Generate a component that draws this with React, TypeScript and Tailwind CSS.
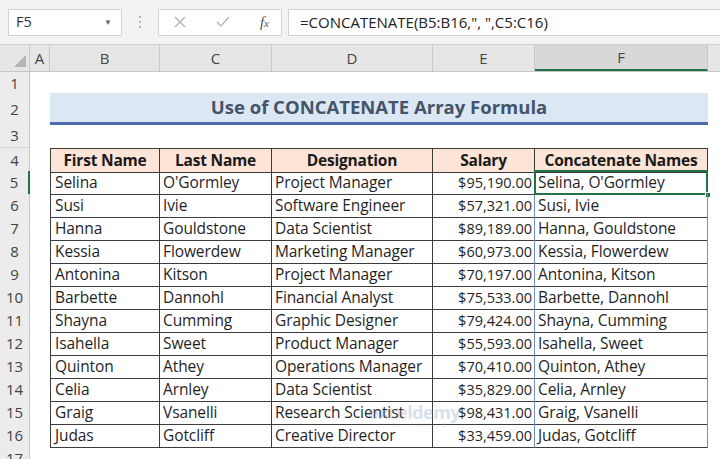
import React from "react";

const COLS = "grid grid-cols-[30px_20px_110px_112px_161px_102px_173px_12px]";

const data: [string, string, string, string][] = [
  ["Selina", "O'Gormley", "Project Manager", "$95,190.00"],
  ["Susi", "Ivie", "Software Engineer", "$57,321.00"],
  ["Hanna", "Gouldstone", "Data Scientist", "$89,189.00"],
  ["Kessia", "Flowerdew", "Marketing Manager", "$60,973.00"],
  ["Antonina", "Kitson", "Project Manager", "$70,197.00"],
  ["Barbette", "Dannohl", "Financial Analyst", "$75,533.00"],
  ["Shayna", "Cumming", "Graphic Designer", "$79,424.00"],
  ["Isahella", "Sweet", "Product Manager", "$55,593.00"],
  ["Quinton", "Athey", "Operations Manager", "$70,410.00"],
  ["Celia", "Arnley", "Data Scientist", "$35,829.00"],
  ["Graig", "Vsanelli", "Research Scientist", "$98,431.00"],
  ["Judas", "Gotcliff", "Creative Director", "$33,459.00"],
];

function RowLabel({ n, active }: { n: number; active?: boolean }) {
  return (
    <div
      className={
        "flex items-center justify-center bg-[#ececec] border-b border-[#d6d6d6] text-[15px] text-[#444] " +
        (active ? "border-r-2 border-r-[#217346] bg-[#dcdcdc]" : "border-r border-r-[#c9c9c9]")
      }
    >
      {n}
    </div>
  );
}

const cellText = "text-[15.5px] text-[#1f1f1f] whitespace-nowrap tracking-[-0.1px]";

export default function App() {
  return (
    <div className="w-[720px] h-[459px] overflow-hidden bg-white font-['Open_Sans',sans-serif] relative">
      {/* Toolbar */}
      <div className="h-[44px] bg-[#f3f3f3] flex items-center pl-[8px] gap-0">
        <div className="w-[114px] h-[27px] bg-white border border-[#d4d4d4] flex items-center justify-between pl-[7px] pr-[9px] text-[14.5px] text-[#333]">
          <span>F5</span>
          <span className="text-[8px] text-[#666]">▼</span>
        </div>
        <div className="w-[36px] flex flex-col items-center gap-[3px]">
          <span className="w-[2px] h-[2px] bg-[#b5b5b5]" />
          <span className="w-[2px] h-[2px] bg-[#b5b5b5]" />
          <span className="w-[2px] h-[2px] bg-[#b5b5b5]" />
        </div>
        <div className="w-[124px] h-[27px] bg-white border border-[#d4d4d4] flex items-center pl-[14px] pr-[12px] justify-between">
          <svg width="14" height="14" viewBox="0 0 14 14">
            <path d="M2 2 L12 12 M12 2 L2 12" stroke="#b8b8b8" strokeWidth="1.5" />
          </svg>
          <svg width="16" height="14" viewBox="0 0 16 14">
            <path d="M2 7 L6 11 L14 2" stroke="#b8b8b8" strokeWidth="1.5" fill="none" />
          </svg>
          <span className="font-['Liberation_Serif',serif] italic text-[15px] text-[#555]">
            f<span className="text-[11px]">x</span>
          </span>
        </div>
        <div className="ml-[6px] flex-1 h-[27px] bg-white border border-[#d4d4d4] border-r-0 flex items-center pl-[11px] text-[15px] text-[#222]">
          =CONCATENATE(B5:B16,", ",C5:C16)
        </div>
      </div>

      {/* Column headers */}
      <div className={COLS + " h-[28px] bg-[#e6e6e6] border-t border-[#d0d0d0] border-b border-b-[#c6c6c6] text-[15px] text-[#444]"}>
        <div className="relative border-r border-[#c9c9c9]">
          <svg className="absolute right-[3px] bottom-[4px]" width="12" height="12" viewBox="0 0 12 12">
            <path d="M12 0 L12 12 L0 12 Z" fill="#b3b3b3" />
          </svg>
        </div>
        <div className="flex items-center justify-center border-r border-[#c9c9c9]">A</div>
        <div className="flex items-center justify-center border-r border-[#c9c9c9]">B</div>
        <div className="flex items-center justify-center border-r border-[#c9c9c9]">C</div>
        <div className="flex items-center justify-center border-r border-[#c9c9c9]">D</div>
        <div className="flex items-center justify-center border-r border-[#c9c9c9]">E</div>
        <div className="flex items-center justify-center border-r border-[#c9c9c9] bg-[#d8d8d8] border-b-2 border-b-[#217346]">F</div>
        <div />
      </div>

      {/* Row 1 */}
      <div className={COLS + " h-[22px]"}>
        <RowLabel n={1} />
      </div>

      {/* Row 2 - title */}
      <div className={COLS + " h-[30px]"}>
        <RowLabel n={2} />
        <div />
        <div className="col-span-5 mt-[-1px] bg-[#dce7f4] border-b-[3px] border-[#4b6cb0] flex items-center justify-center font-bold text-[18.5px] text-[#44546a] pb-[1px]">
          Use of CONCATENATE Array Formula
        </div>
      </div>

      {/* Row 3 */}
      <div className={COLS + " h-[24px]"}>
        <RowLabel n={3} />
      </div>

      {/* Row 4 - header */}
      <div className={COLS + " h-[23px]"}>
        <RowLabel n={4} />
        <div />
        {["First Name", "Last Name", "Designation", "Salary", "Concatenate Names"].map((h, i) => (
          <div
            key={h}
            className={
              "bg-[#fce4d6] border-t border-b border-r border-[#3c3c3c] flex items-center justify-center font-bold text-[15.5px] text-[#1a1a1a] whitespace-nowrap tracking-[-0.2px] " +
              (i === 0 ? "border-l" : "")
            }
          >
            {h}
          </div>
        ))}
        <div />
      </div>

      {/* Data rows */}
      {data.map((r, idx) => (
        <div key={idx} className={COLS + " h-[23px]"}>
          <RowLabel n={idx + 5} active={idx === 0} />
          <div />
          <div className={"border-l border-r border-b border-[#3c3c3c] flex items-center pl-[4px] " + cellText}>
            {r[0]}
          </div>
          <div className={"border-r border-b border-[#3c3c3c] flex items-center pl-[3px] " + cellText}>
            {r[1]}
          </div>
          <div className={"border-r border-b border-[#3c3c3c] flex items-center pl-[3px] " + cellText}>
            {r[2]}
          </div>
          <div className="border-r border-r-[#6f8fc8] border-b border-b-[#3c3c3c] flex items-center justify-end pr-[2px] text-[14.5px] text-[#1f1f1f] whitespace-nowrap">
            {r[3]}
          </div>
          <div className={"relative border-r border-r-[#6f8fc8] border-b border-b-[#3c3c3c] flex items-center pl-[3px] " + cellText}>
            {r[0]}, {r[1]}
            {idx === 0 && (
              <>
                <div className="absolute left-[-1px] top-[-1px] right-[-1px] bottom-[-1px] border-2 border-[#217346] pointer-events-none" />
                <div className="absolute right-[-4px] bottom-[-4px] w-[6px] h-[6px] bg-[#217346] border border-white" />
              </>
            )}
          </div>
          <div />
        </div>
      ))}

      {/* Row 17 */}
      <div className={COLS + " h-[23px]"}>
        <RowLabel n={17} />
      </div>

      {/* Watermark */}
      <div className="absolute left-[368px] top-[403px] flex flex-col items-center opacity-30 pointer-events-none">
        <span className="text-[18px] leading-[18px] font-bold text-[#7f9cc8] tracking-tight">exceldemy</span>
        <span className="text-[5px] leading-[8px] text-[#7f9cc8] tracking-[2px]">EXCEL · DATA · BI</span>
      </div>
    </div>
  );
}
